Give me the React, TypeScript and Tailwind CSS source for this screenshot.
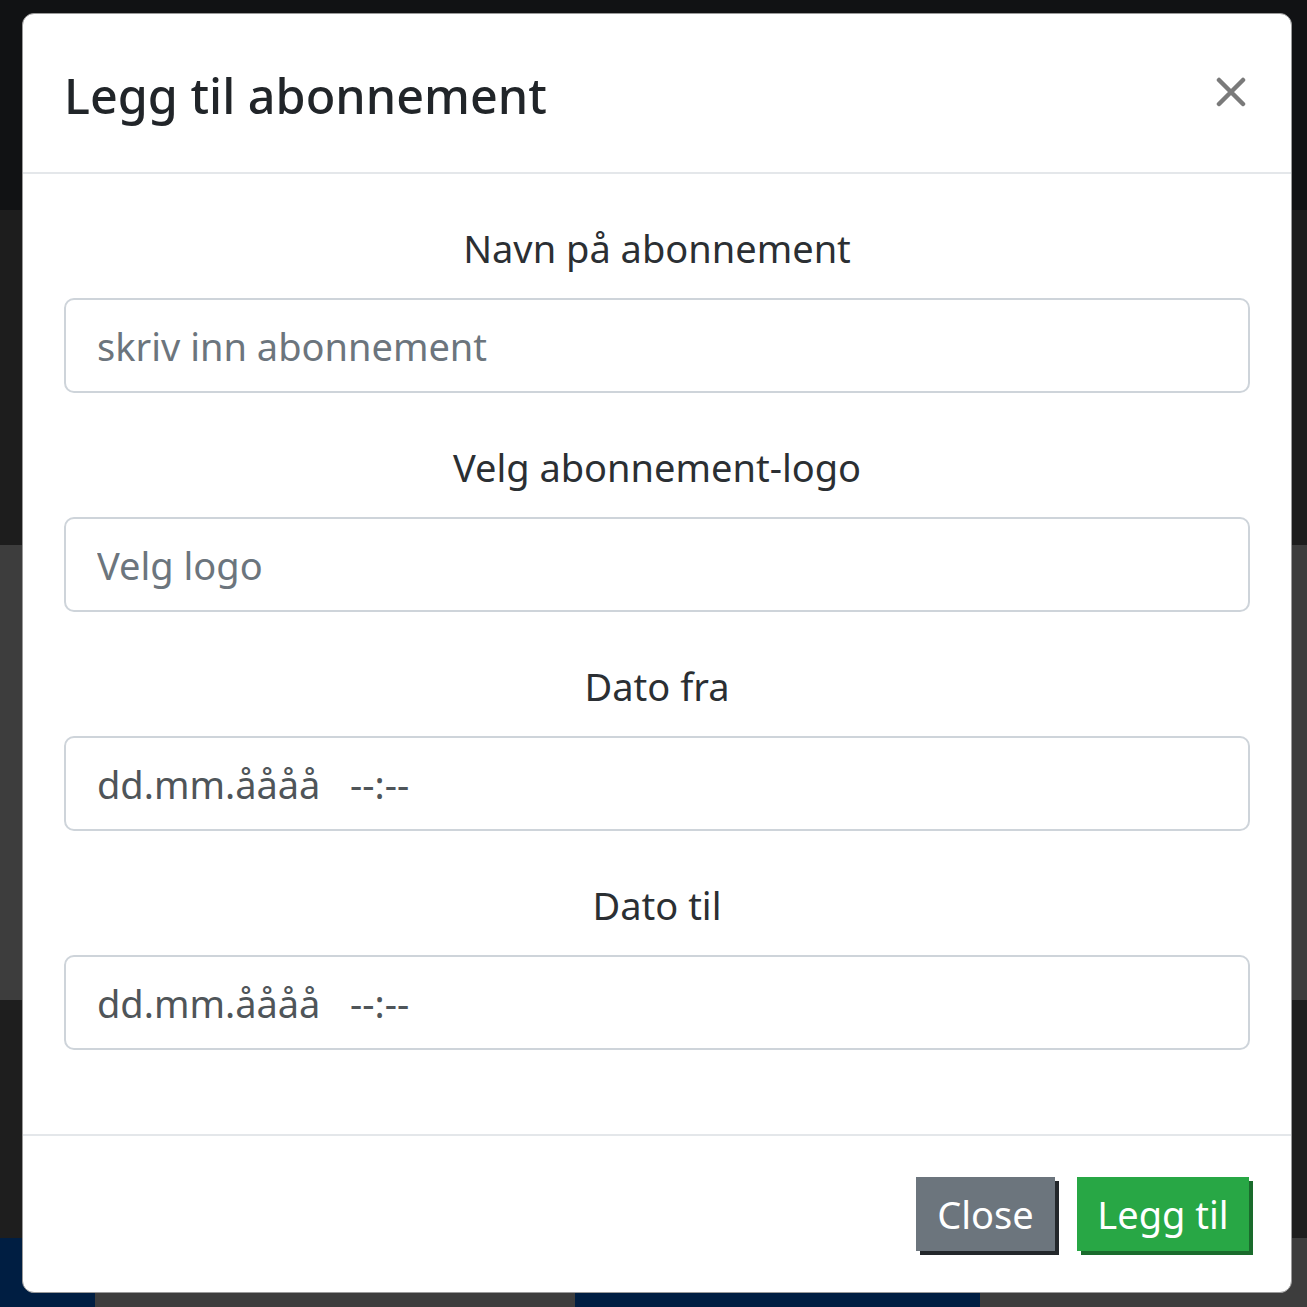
import { useState } from "react"

const font = { fontFamily: '"Segoe UI", "Noto Sans", "Open Sans", sans-serif' }

const Field = ({ label, placeholder, value }: { label: string; placeholder?: string; value?: string }) => {
	const [text, setText] = useState(value ?? "")
	return (
		<div className="flex flex-col mb-[44px]">
			<label className="h-[60px] mb-[20px] flex items-center justify-center text-[38px] text-[#2b2f33]">{label}</label>
			<input
				value={text}
				onChange={e => setText(e.target.value)}
				placeholder={placeholder}
				className={`h-[95px] w-full rounded-[10px] border-2 border-[#ced4da] bg-white px-[31px] text-[38px] outline-none placeholder:text-[#6c757d] ${value ? "text-[#4f5559]" : "text-[#212529]"}`}
				style={font}
			/>
		</div>
	)
}

const App = () => {
	return (
		<div className="relative w-[1307px] h-[1307px] overflow-hidden bg-[#1e1e1e]" style={font}>
			{/* dimmed page behind the modal */}
			<div className="flex flex-col h-full">
				<div className="h-[210px] bg-[#111214]"></div>
				<div className="h-[335px] bg-[#1d1d1d]"></div>
				<div className="h-[455px] bg-[#3d3d3d]"></div>
				<div className="h-[238px] bg-[#1e1e1e]"></div>
				<div className="flex flex-1">
					<div className="w-[95px] bg-[#001e42]"></div>
					<div className="w-[480px] bg-[#3d3d3d]"></div>
					<div className="w-[405px] bg-[#001e42]"></div>
					<div className="flex-1 bg-[#3d3d3d]"></div>
				</div>
			</div>

			<div className="absolute left-[22px] top-[13px] w-[1270px] h-[1280px] flex flex-col rounded-[12px] bg-white border border-[#9a9a9a]">
				<div className="h-[160px] flex items-center justify-between pl-[41px] pr-[40px] border-b-2 border-[#e4e7ea]">
					<h5 className="text-[48.5px] font-medium text-[#212529] leading-none pt-[4px]">Legg til abonnement</h5>
					<button className="w-[40px] h-[40px] flex items-center justify-center mb-[2px]">
						<svg viewBox="0 0 30 30" className="w-[30px] h-[30px]">
							<path d="M3 3 L27 27 M27 3 L3 27" stroke="#7a7a7a" strokeWidth="4.5" strokeLinecap="round" />
						</svg>
					</button>
				</div>

				<div className="flex-1 flex flex-col px-[41px] pt-[44px]">
					<Field label="Navn på abonnement" placeholder="skriv inn abonnement" />
					<Field label="Velg abonnement-logo" placeholder="Velg logo" />
					<Field label="Dato fra" value={"dd.mm.åååå\u00a0\u00a0\u00a0--:--"} />
					<Field label="Dato til" value={"dd.mm.åååå\u00a0\u00a0\u00a0--:--"} />
				</div>

				<div className="h-[158px] flex items-center justify-end gap-[22px] px-[42px] border-t-2 border-[#e4e7ea]">
					<button className="h-[74px] w-[139px] bg-[#6c757d] text-white text-[38px] shadow-[4px_4px_0_#23272b]">Close</button>
					<button className="h-[74px] w-[172px] bg-[#28a745] text-white text-[38px] shadow-[4px_4px_0_#1a6b2c]">Legg til</button>
				</div>
			</div>
		</div>
	)
}

export default App
